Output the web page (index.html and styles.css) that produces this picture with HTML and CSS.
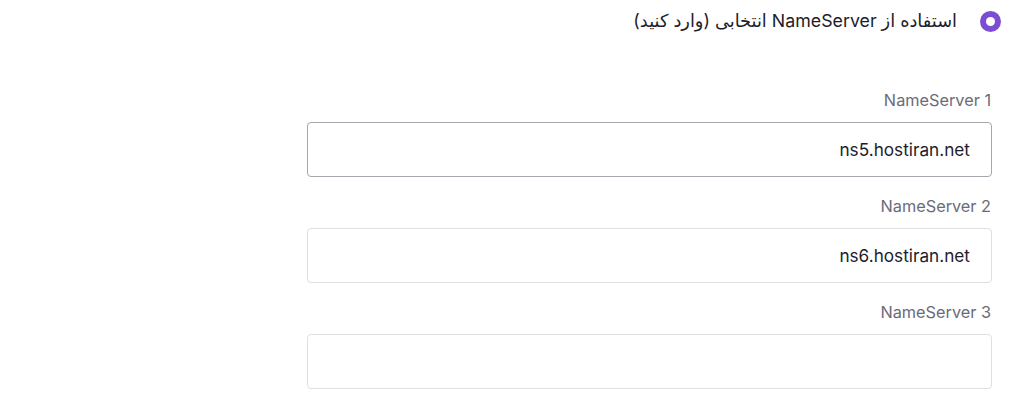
FILE: index.html
```html
<!DOCTYPE html>
<html lang="fa" dir="rtl">
<head>
<meta charset="utf-8">
<link rel="stylesheet" href="styles.css">
</head>
<body>
<div class="page">
  <label class="option">
    <span class="radio"><span class="dot"></span></span>
    <span class="option-text">استفاده از NameServer انتخابی (وارد کنید)</span>
  </label>
  <div class="fields">
    <div class="field">
      <div class="field-label" dir="ltr">NameServer 1</div>
      <div class="input focused" dir="ltr">ns5.hostiran.net</div>
    </div>
    <div class="field">
      <div class="field-label" dir="ltr">NameServer 2</div>
      <div class="input" dir="ltr">ns6.hostiran.net</div>
    </div>
    <div class="field">
      <div class="field-label" dir="ltr">NameServer 3</div>
      <div class="input" dir="ltr"></div>
    </div>
  </div>
</div>
</body>
</html>
```
FILE: styles.css
```css
* { box-sizing: border-box; }
html, body { margin: 0; padding: 0; background: #fff; }
body {
  font-family: Inter, "DejaVu Sans", sans-serif;
  color: #1d1d2b;
}
.page {
  width: 1012px;
  height: 400px;
  overflow: hidden;
}
.option {
  display: flex;
  align-items: center;
  gap: 23px;
  padding: 9px 11px 0 0;
  height: 33px;
}
.radio {
  width: 21px;
  height: 21px;
  border-radius: 50%;
  background: #7b4dd3;
  display: flex;
  align-items: center;
  justify-content: center;
  flex: none;
}
.dot {
  width: 9px;
  height: 9px;
  border-radius: 50%;
  background: #fff;
}
.option-text {
  font-size: 17.8px;
  line-height: 22px;
  color: #1d1d2b;
}
.fields {
  display: flex;
  flex-direction: column;
  gap: 18px;
  padding: 56px 20px 0 0;
  width: 705px;
}
.field {
  display: flex;
  flex-direction: column;
  gap: 11px;
}
.field-label {
  font-size: 16.3px;
  line-height: 22px;
  color: #6b6b78;
  text-align: right;
  padding-right: 1px;
}
.input {
  height: 55px;
  border: 1px solid #dfdfe3;
  border-radius: 4px;
  padding: 0 21px;
  font-size: 17.2px;
  line-height: 53px;
  color: #1d1d2b;
  text-align: right;
}
.input.focused {
  border-color: #a6a6ae;
}
```
